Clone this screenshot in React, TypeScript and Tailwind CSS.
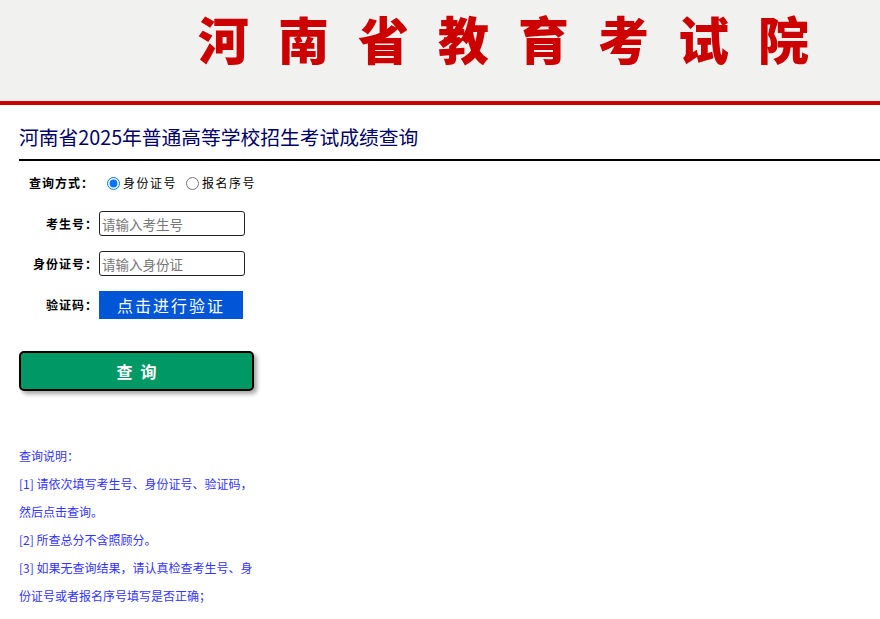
import { useState } from "react";

const cjk = { fontFamily: '"Noto Sans CJK SC", "Noto Sans", sans-serif' };

function Header() {
  return (
    <div className="h-[105px] bg-[#f1f1ef] border-b-4 border-[#cc0000]">
      <div className="pl-[198px] pt-[6px] text-[51px] leading-[64px] font-black text-[#cc0000] tracking-[29px] whitespace-nowrap">
        河南省教育考试院
      </div>
    </div>
  );
}

function Row({ label, children }: { label: string; children: React.ReactNode }) {
  return (
    <div className="flex items-center">
      <div className="w-[80px] pr-[1px] text-right text-[12px] font-bold text-black tracking-[1px] whitespace-nowrap">{label}</div>
      {children}
    </div>
  );
}

export default function App() {
  const [mode, setMode] = useState("id");

  return (
    <div className="min-h-screen bg-white" style={cjk}>
      <Header />

      <div className="pl-[19px]">
        {/* page title */}
        <h1 className="pt-[21px] pb-[11px] text-[19.75px] leading-[22px] text-[#000066] border-b-2 border-black">
          河南省2025年普通高等学校招生考试成绩查询
        </h1>

        <div className="pt-[10px]">
          <div className="h-[24px] flex items-center">
            <div className="w-[80px] pl-[10px] text-[12px] font-bold tracking-[1px] whitespace-nowrap">查询方式：</div>
            <label className="flex items-center text-[12px] tracking-[1.5px] ml-[8px]">
              <input
                type="radio"
                name="mode"
                className="w-[13px] h-[13px] m-0 mr-[3px] accent-[#0075ff]"
                checked={mode === "id"}
                onChange={() => setMode("id")}
              />
              身份证号
            </label>
            <label className="flex items-center text-[12px] tracking-[1.5px] ml-[9px]">
              <input
                type="radio"
                name="mode"
                className="w-[13px] h-[13px] m-0 mr-[3px]"
                checked={mode === "bm"}
                onChange={() => setMode("bm")}
              />
              报名序号
            </label>
          </div>

          <div className="mt-[16px]">
            <Row label="考生号：">
              <input
                placeholder="请输入考生号"
                className="w-[146px] h-[25px] border border-[#222] rounded-[3px] px-[2px] text-[13.5px] placeholder:text-[#777] outline-none"
              />
            </Row>
          </div>

          <div className="mt-[15px]">
            <Row label="身份证号：">
              <input
                placeholder="请输入身份证"
                className="w-[146px] h-[25px] border border-[#222] rounded-[3px] px-[2px] text-[13.5px] placeholder:text-[#777] outline-none"
              />
            </Row>
          </div>

          <div className="mt-[15px]">
            <Row label="验证码：">
              <button className="w-[144px] h-[28px] bg-[#0056d6] text-white text-[16px] tracking-[2px] leading-[28px]">
                点击进行验证
              </button>
            </Row>
          </div>

          <button className="mt-[32px] w-[235px] h-[40px] flex items-center justify-center gap-[8px] bg-[#009966] border-2 border-black rounded-[5px] shadow-[3px_3px_4px_rgba(0,0,0,0.35)] text-white text-[16px] font-bold">
            <span>查</span>
            <span>询</span>
          </button>
        </div>

        {/* notes */}
        <div className="mt-[51px] w-[240px] text-[12px] leading-[28px] text-[#3333ff]">
          <p>查询说明：</p>
          <p>[1] 请依次填写考生号、身份证号、验证码，</p>
          <p>然后点击查询。</p>
          <p>[2] 所查总分不含照顾分。</p>
          <p>[3] 如果无查询结果，请认真检查考生号、身份证号或者报名序号填写是否正确；</p>
        </div>
      </div>
    </div>
  );
}
